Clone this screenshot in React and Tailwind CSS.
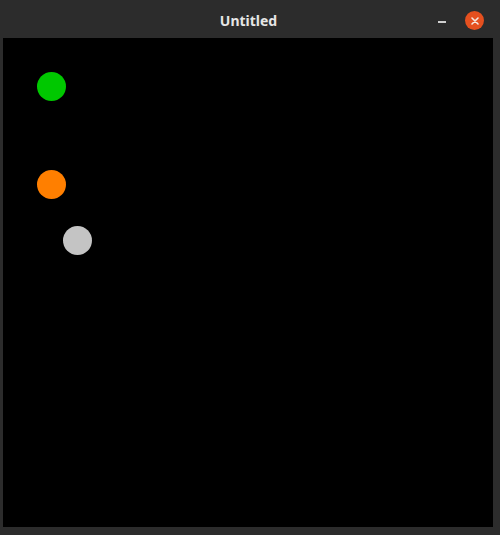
import React from 'react';

const dots = [
    { id: 'green', cls: 'bg-[#00c800]', x: 37, y: 72 },
    { id: 'orange', cls: 'bg-[#ff7f00]', x: 37, y: 170 },
    { id: 'gray', cls: 'bg-[#c4c4c4]', x: 63, y: 226 },
];

export default function App() {
    return (
        <div className="w-[500px] h-[535px] bg-[#2c2c2c] flex flex-col px-[3px] pb-[8px]" style={{ fontFamily: '"Noto Sans", "DejaVu Sans", sans-serif' }}>
            <div className="h-[38px] shrink-0 flex items-center relative pt-[3px]">
                <div className="flex-1 text-center text-[14px] font-bold text-[#e6e6e6] pr-[3px]">Untitled</div>
                <div className="absolute right-[13px] top-[11px] flex items-center gap-[19px]">
                    <div className="w-[8px] h-[2px] bg-[#d0d0d0] mt-[2px]" />
                    <div className="w-[19px] h-[19px] rounded-full bg-[#e5501f] flex items-center justify-center">
                        <svg width="8" height="8" viewBox="0 0 8 8">
                            <path d="M1 1 L7 7 M7 1 L1 7" stroke="#f5e8e0" strokeWidth="1.6" strokeLinecap="round" />
                        </svg>
                    </div>
                </div>
            </div>
            <div className="flex-1 bg-black relative mr-[4px]">
                {dots.map(d => (
                    <div
                        key={d.id}
                        className={`absolute w-[29px] h-[29px] rounded-full ${d.cls}`}
                        style={{ left: d.x - 3, top: d.y - 38 }}
                    />
                ))}
            </div>
        </div>
    );
}
